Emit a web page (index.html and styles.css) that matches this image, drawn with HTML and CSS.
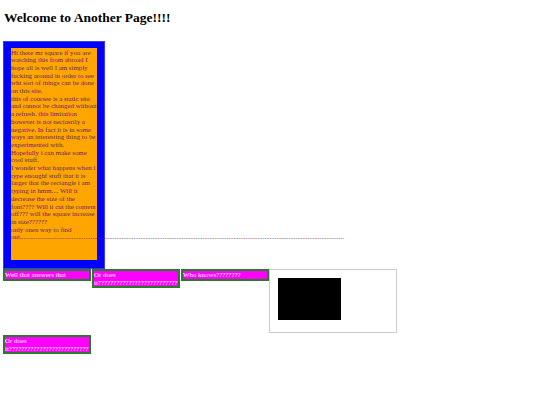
FILE: index.html
```html
<!DOCTYPE html>
<html>
<head>
<meta charset="utf-8">
<title>Another Page</title>
<link rel="stylesheet" href="styles.css">
</head>
<body>
<div class="page">
  <h1 class="title">Welcome to Another Page!!!!</h1>
  <div class="square">
    <div class="inner">Hi there mr square if you are watching this from abroad I hope all is well I am simply fucking around in order to see wht sort of things can be done on this site.<br>this of coursee is a static site and cannot be changed without a refresh. this limitation however is not neciasrily a negative. In fact it is in some ways an interesting thing to be experimented with.<br>Hopefully i can make some cool stuff.<br>I wonder what happens when i type enoughf stuff that it is larger that the rectangle i am typing in hmm.... Will it decrease the size of the font???? Will it cut the content off??? will the square increase in size??????<br>only onen way to find out............................................................................................................................................................................................</div>
  </div>
  <div class="row">
    <div class="tag">Well that answers that</div>
    <div class="tag">Or does it???????????????????????????</div>
    <div class="tag">Who knows????????</div>
    <div class="frame"><div class="block"></div></div>
  </div>
  <div class="row2">
    <div class="tag">Or does it???????????????????????????</div>
  </div>
</div>
</body>
</html>
```
FILE: styles.css
```css
html, body {
  margin: 0;
  padding: 0;
  background: #ffffff;
}
.page {
  padding: 0 3px;
  font-family: "Liberation Serif", "Times New Roman", serif;
}
.title {
  margin: 0;
  padding: 9px 0 0 1px;
  font-size: 13.5px;
  line-height: 18px;
  font-weight: bold;
  color: #000;
}
.square {
  margin-top: 14px;
  width: 86px;
  padding: 6px 7px 8px 7px;
  background: #0000ff;
  border: 1px solid #3a3aff;
}
.inner {
  height: 212px;
  background: #ffa500;
  color: #6a1f6a;
  font-size: 6.9px;
  line-height: 7.7px;
  padding-top: 0.5px;
  box-sizing: border-box;
  overflow: visible;
}
.row {
  display: flex;
  align-items: flex-start;
  gap: 1px;
}
.row2 {
  display: flex;
  margin-top: 2px;
}
.tag {
  width: 84px;
  background: #ff00ff;
  border: 2px solid #2b7a2b;
  color: #ffffff;
  font-size: 6.9px;
  line-height: 7.7px;
  overflow: hidden;
}
.frame {
  margin-left: -1px;
  border: 1px solid #cccccc;
  padding: 8px 0 0 8px;
  box-sizing: border-box;
  height: 64px;
  width: 128px;
}
.block {
  width: 63px;
  height: 42px;
  background: #000000;
}
```
